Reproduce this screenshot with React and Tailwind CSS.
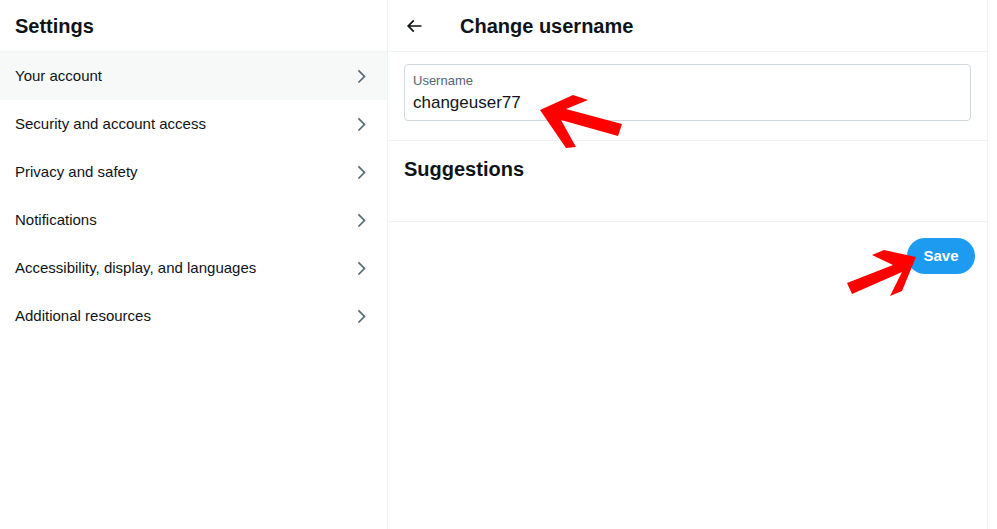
import React from "react";

const menuItems = [
  "Your account",
  "Security and account access",
  "Privacy and safety",
  "Notifications",
  "Accessibility, display, and languages",
  "Additional resources",
];

const Chevron = () => (
  <svg viewBox="0 0 24 24" className="w-[18.75px] h-[18.75px] fill-[#536471]">
    <path d="M14.586 12L7.543 4.96l1.414-1.42L17.414 12l-8.457 8.46-1.414-1.42L14.586 12z" />
  </svg>
);

const BackArrow = () => (
  <svg viewBox="0 0 24 24" className="w-5 h-5 fill-[#0f1419]">
    <path d="M7.414 13l5.043 5.04-1.414 1.42L3.586 12l7.457-7.46 1.414 1.42L7.414 11H21v2H7.414z" />
  </svg>
);

const App = () => {
  return (
    <div
      className="relative flex h-[529px] w-full bg-white text-[#0f1419] overflow-hidden"
      style={{ fontFamily: '"Liberation Sans", Arial, sans-serif' }}
    >
      {/* settings list */}
      <div className="w-[388px] shrink-0 border-r border-[#eff3f4] flex flex-col">
        <div className="h-[52px] border-b border-[#eff3f4] flex items-center px-[15px]">
          <h2 className="text-[20px] font-bold leading-6">Settings</h2>
        </div>
        {menuItems.map((item, index) => (
          <div
            key={index}
            className={`h-12 flex items-center justify-between pl-[15px] pr-4 ${
              index === 0 ? "bg-[#f7f9f9]" : ""
            }`}
          >
            <span className="text-[15px] leading-5">{item}</span>
            <Chevron />
          </div>
        ))}
      </div>

      {/* change username */}
      <div className="w-[600px] shrink-0 border-r border-[#eff3f4] flex flex-col">
        <div className="h-[52px] border-b border-[#eff3f4] flex items-center px-4">
          <div className="w-14 flex items-center">
            <BackArrow />
          </div>
          <h2 className="text-[20px] font-bold leading-6">Change username</h2>
        </div>
        <div className="h-[89px] border-b border-[#eff3f4] px-4 pt-3">
          <div className="h-[57px] border border-[#cfd9de] rounded px-2 pt-2">
            <div className="text-[13px] leading-4 text-[#536471]">Username</div>
            <div className="text-[17px] leading-6 mt-[2px]">changeuser77</div>
          </div>
        </div>
        <div className="h-[81px] border-b border-[#eff3f4] px-4 pt-4">
          <h3 className="text-[20px] font-bold leading-6">Suggestions</h3>
        </div>
        <div className="flex justify-end pt-4 pr-3">
          <button className="h-9 w-[68px] rounded-full bg-[#1d9bf0] text-white text-[15px] font-bold">
            Save
          </button>
        </div>
      </div>

      {/* annotation arrows */}
      <svg
        className="absolute inset-0 pointer-events-none"
        width="997"
        height="529"
        viewBox="0 0 997 529"
      >
        <polygon
          fill="#ff0000"
          points="540,110 573,95 588,100 566,109 622,124 618,136 561,120 576,147 566,148"
        />
        <polygon
          fill="#ff0000"
          points="916,257 884,250 872,255 893,265 847,283 852,294 902,272 890,296 902,291"
        />
      </svg>
    </div>
  );
};

export default App;
